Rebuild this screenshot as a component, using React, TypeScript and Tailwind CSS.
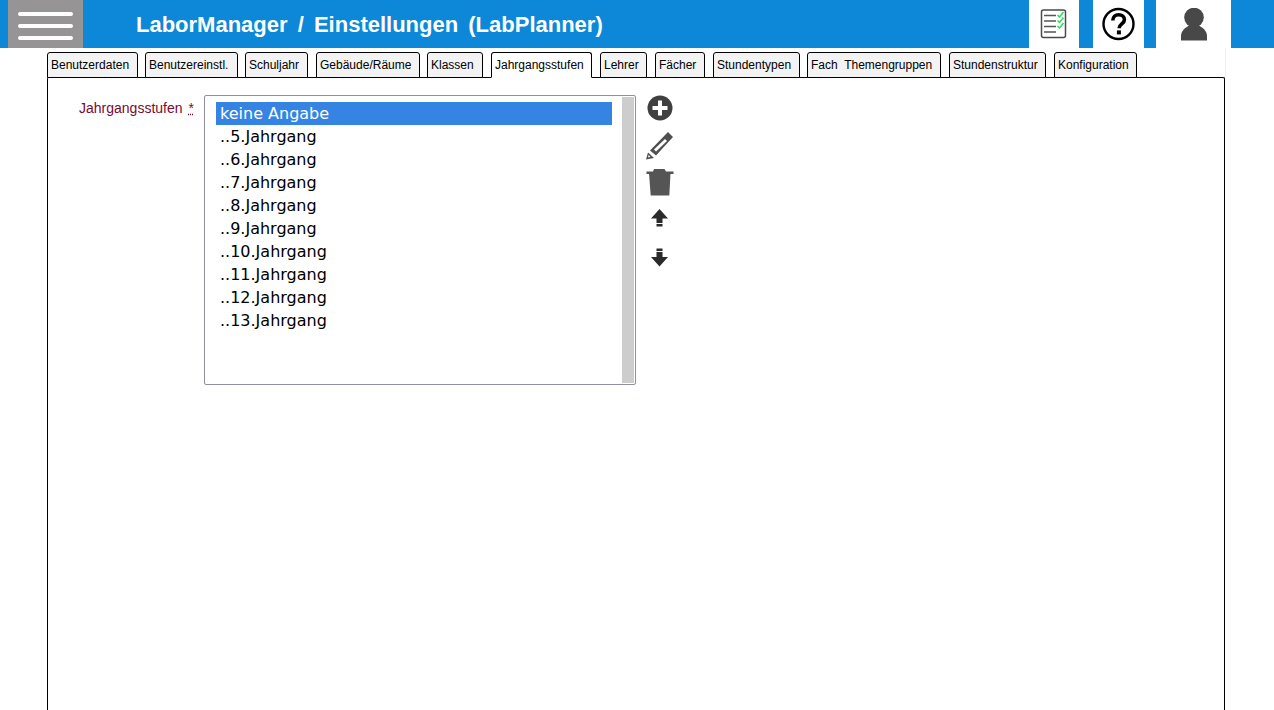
const tabs = [
  { label: "Benutzerdaten", width: "w-[91px]", gap: "mr-[7px]" },
  { label: "Benutzereinstl.", width: "w-[93px]", gap: "mr-[7px]" },
  { label: "Schuljahr", width: "w-[63px]", gap: "mr-[8px]" },
  { label: "Gebäude/Räume", width: "w-[104px]", gap: "mr-[7px]" },
  { label: "Klassen", width: "w-[56px]", gap: "mr-[8px]" },
  { label: "Jahrgangsstufen", width: "w-[101px]", gap: "mr-[8px]", active: true },
  { label: "Lehrer", width: "w-[47px]", gap: "mr-[8px]" },
  { label: "Fächer", width: "w-[50px]", gap: "mr-[8px]" },
  { label: "Stundentypen", width: "w-[87px]", gap: "mr-[7px]" },
  { label: "Fach  Themengruppen", width: "w-[134px]", gap: "mr-[8px]" },
  { label: "Stundenstruktur", width: "w-[97px]", gap: "mr-[8px]" },
  { label: "Konfiguration", width: "w-[83px]", gap: "" },
];

const grades = [
  "keine Angabe",
  "..5.Jahrgang",
  "..6.Jahrgang",
  "..7.Jahrgang",
  "..8.Jahrgang",
  "..9.Jahrgang",
  "..10.Jahrgang",
  "..11.Jahrgang",
  "..12.Jahrgang",
  "..13.Jahrgang",
];

function ChecklistIcon() {
  return (
    <svg width="28" height="30" viewBox="0 0 28 30" fill="none">
      <rect x="1.5" y="1" width="24" height="27.5" rx="2" stroke="#4a4a4a" strokeWidth="1.5" />
      <path d="M4 6.5h12M4 12h12M4 17.500h12M4 23h12" stroke="#555" strokeWidth="1.6" />
      <path d="M17.500 6l2 2 4-5M17.500 11.500l2 2 4-5M17.500 17l2 2 4-5" stroke="#22e05a" strokeWidth="1.5" />
    </svg>
  );
}

function HelpIcon() {
  return (
    <svg width="34" height="34" viewBox="0 0 34 34" fill="none">
      <circle cx="16.500" cy="17" r="15" stroke="#000" strokeWidth="2.400" />
      <path d="M10.800 13.500c0-3.600 2.500-5.800 5.800-5.800 3.400 0 5.800 2 5.800 5 0 4.300-5.300 4.200-5.300 8.600" stroke="#000" strokeWidth="3.600" />
      <rect x="14.900" y="23.400" width="4" height="4" fill="#000" />
    </svg>
  );
}

function UserIcon() {
  return (
    <svg width="28" height="33" viewBox="0 0 28 33" fill="#484848">
      <circle cx="14" cy="9.500" r="9.800" />
      <path d="M1 32.500V28c0-5 4-8 8-10.500h10c4 2.500 8 5.500 8 10.500v4.500z" />
    </svg>
  );
}

function PlusIcon() {
  return (
    <svg width="26" height="26" viewBox="0 0 26 26">
      <circle cx="13" cy="13" r="12.500" fill="#404040" />
      <path d="M11 5.500h4v5.500h5.500v4H15v5.500h-4V15H5.500v-4H11z" fill="#fff" />
    </svg>
  );
}

function PencilIcon() {
  return (
    <svg width="28" height="28" viewBox="0 0 28 28">
      <path d="M22 0l5 5L10 23.500l-6-5zM8 17.500L19 7l2 2-11 10.500z" fill="#505050" fillRule="evenodd" />
      <path d="M2 20.500l6 5.500-8 1.500zM2.600 23l-.6 2.400 2.500-.6z" fill="#505050" fillRule="evenodd" />
    </svg>
  );
}

function TrashIcon() {
  return (
    <svg width="28" height="28" viewBox="0 0 28 28" fill="#555">
      <path d="M8 1h10.500L20 3.500h7.500V6H0.500V3.500H7z" />
      <path d="M3 5h21.500L23.300 27.500H4.700z" />
    </svg>
  );
}

function ArrowUpIcon() {
  return (
    <svg width="18" height="20" viewBox="0 0 18 20" fill="#2b2b2b">
      <path d="M8.500 1L17 10.500H11.500V15h-6v-4.500H0z" />
      <path d="M5.500 16h6v2.500h-6z" />
    </svg>
  );
}

function ArrowDownIcon() {
  return (
    <svg width="18" height="20" viewBox="0 0 18 20" fill="#2b2b2b">
      <path d="M8.500 19.500L0 10h5.500V5h6v5H17z" />
      <path d="M5.500 1.500h6V4h-6z" />
    </svg>
  );
}

export default function App() {
  return (
    <div className="h-[710px] w-[1274px] overflow-hidden bg-white flex flex-col font-['Liberation_Sans',Arial,sans-serif]">
      {/* Header */}
      <header className="h-12 shrink-0 bg-[#0d87d7] flex items-stretch">
        <button className="ml-2 w-[75px] pt-1 bg-[#969495] flex flex-col items-center justify-center gap-2">
          <span className="block w-[55px] h-1 rounded-full bg-white" />
          <span className="block w-[55px] h-1 rounded-full bg-white" />
          <span className="block w-[55px] h-1 rounded-full bg-white" />
        </button>
        <h1 className="ml-[53px] flex-1 flex items-center text-white text-[22px] font-bold whitespace-pre [word-spacing:4px]">
          LaborManager / Einstellungen (LabPlanner)
        </h1>
        <div className="w-[50px] bg-white flex items-center justify-center">
          <ChecklistIcon />
        </div>
        <div className="ml-[14px] w-[51px] bg-white flex items-center justify-center">
          <HelpIcon />
        </div>
        <div className="ml-[12px] mr-[43px] w-[75px] bg-white flex items-center justify-center">
          <UserIcon />
        </div>
      </header>

      <div className="mx-[47px] w-[1178px] flex-1 flex flex-col min-h-0">
        {/* Tabs */}
        <div className="w-[1179px] pt-1 h-[30px] shrink-0 flex relative z-10 border-r border-[#f1f1f1]">
          {tabs.map((tab) => (
            <div
              key={tab.label}
              className={`${tab.width} ${tab.gap} h-[26px] pl-[3px] border border-black rounded-t-[3px] text-[12px] text-black leading-[24px] whitespace-pre ${
                tab.active ? "bg-white border-b-white" : "bg-[#f3f3f3]"
              }`}
            >
              {tab.label}
            </div>
          ))}
        </div>

        {/* Panel */}
        <div className="-mt-px flex-1 border border-b-0 border-black rounded-t-[2px] flex items-start pt-[17px]">
          <div className="w-[147px] pr-px pt-1 flex justify-end text-[14px] leading-[18px] text-[#7b0a30]">
            <span>Jahrgangsstufen</span>
            <span className="ml-[6px] underline decoration-dotted">*</span>
          </div>

          <div className="relative ml-[9px] w-[432px] h-[290px] border border-[#8f8f9d] rounded-[2px] bg-white pl-[11px] pt-[6px] font-['DejaVu_Sans',sans-serif] text-[16px] text-black">
            <ul className="w-[396px]">
              {grades.map((grade, index) => (
                <li
                  key={grade}
                  className={`h-[23px] leading-[23px] pl-1 ${index === 0 ? "bg-[#3584e4] text-white" : ""}`}
                >
                  {grade}
                </li>
              ))}
            </ul>
            <div className="absolute right-px top-px bottom-px w-[12px] bg-[#cdcdcd]" />
          </div>

          <div className="ml-[10px] w-[28px] flex flex-col items-center">
            <PlusIcon />
            <div className="mt-[11px]"><PencilIcon /></div>
            <div className="mt-[8px]"><TrashIcon /></div>
            <div className="mt-[12px]"><ArrowUpIcon /></div>
            <div className="mt-[19px]"><ArrowDownIcon /></div>
          </div>
        </div>
      </div>
    </div>
  );
}
